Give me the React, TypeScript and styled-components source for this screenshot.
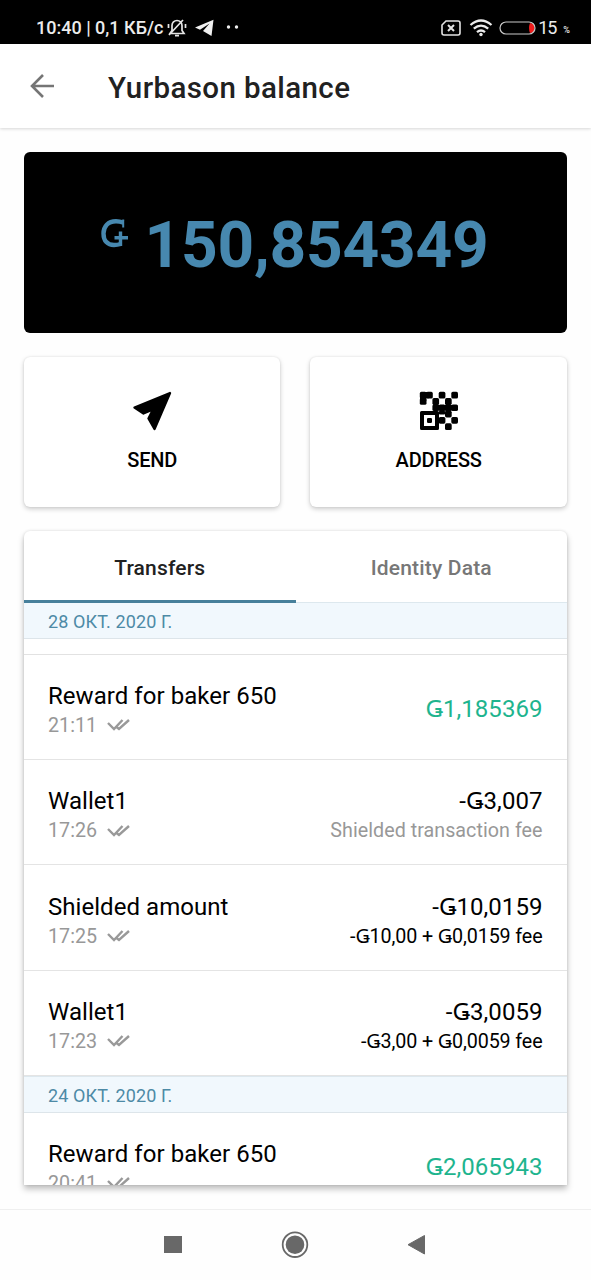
import React from "react";
import styled, { createGlobalStyle } from "styled-components";

const GlobalStyle = createGlobalStyle`
  * { box-sizing: border-box; }
  body { margin: 0; background: #fff; font-family: Roboto, "Noto Sans", sans-serif; }
`;

const Screen = styled.div`
  width: 591px;
  height: 1280px;
  display: flex;
  flex-direction: column;
  background: #fefefe;
  overflow: hidden;
`;

const StatusBar = styled.div`
  height: 44px;
  flex: none;
  display: flex;
  align-items: center;
  justify-content: space-between;
  padding: 11px 21px 0 36px;
  background: #000;
  color: #ececec;
  font-size: 18px;
  font-weight: 500;
  white-space: nowrap;
`;

const StatusGroup = styled.div`
  display: flex;
  align-items: center;
  height: 32px;
`;

const StatusText = styled.span<{ $level?: boolean }>`
  margin-left: ${(p) => (p.$level ? 2 : 0)}px;
  font-weight: ${(p) => (p.$level ? 400 : 500)};
  letter-spacing: ${(p) => (p.$level ? -1 : 0)}px;
`;

const Percent = styled.span`
  font-size: 9px;
  margin: 5px 0 0 7px;
`;

const StatusIcon = styled.svg<{ $left: number }>`
  display: block;
  margin-left: ${(p) => p.$left}px;
`;

const AppBar = styled.header`
  height: 84px;
  flex: none;
  display: flex;
  align-items: center;
  padding: 0 0 0 28px;
  background: #fff;
  box-shadow: 0 1px 3px rgba(0, 0, 0, 0.16);
`;

const Title = styled.h1`
  margin: 3px 0 0 52px;
  font-size: 29.5px;
  font-weight: 500;
  letter-spacing: 0.4px;
  line-height: 36px;
  color: #212121;
  white-space: nowrap;
`;

const Content = styled.main`
  flex: none;
  height: 1081px;
  padding: 24px 24px 0;
  display: flex;
  flex-direction: column;
  gap: 24px;
`;

const BalanceCard = styled.section`
  height: 180.5px;
  flex: none;
  display: flex;
  align-items: flex-start;
  padding: 56px 0 0 76px;
  border-radius: 6px;
  background: #000;
  color: #4788af;
`;

const CurrencyMark = styled.svg`
  display: block;
  flex: none;
  margin-top: 11px;
`;

const Amount = styled.span`
  margin-left: 16.5px;
  font-size: 64px;
  line-height: 76px;
  font-weight: 700;
  letter-spacing: -0.22px;
`;

const Actions = styled.div`
  display: grid;
  grid-template-columns: 256.4px 1fr;
  gap: 30px;
  height: 150px;
  flex: none;
`;

const Action = styled.button`
  display: flex;
  flex-direction: column;
  align-items: center;
  padding: 34px 0 0;
  border: 0;
  border-radius: 6px;
  background: #fff;
  color: #000;
  box-shadow: 0 2px 5px rgba(0, 0, 0, 0.2), 0 0 2px rgba(0, 0, 0, 0.1);
  font: 500 20px/24px Roboto, sans-serif;
  letter-spacing: -0.18px;
  svg { display: block; margin-bottom: 17px; }
`;

const Panel = styled.section`
  height: 654.5px;
  flex: none;
  border-radius: 6px 6px 0 0;
  background: #fff;
  box-shadow: 0 4px 6px rgba(0, 0, 0, 0.25), 0 0 3px rgba(0, 0, 0, 0.12);
  overflow: hidden;
`;

const Tabs = styled.div`
  display: grid;
  grid-template-columns: 1fr 1fr;
  height: 71.5px;
`;

const Tab = styled.div<{ $active?: boolean }>`
  position: relative;
  height: 72.5px;
  display: flex;
  align-items: center;
  justify-content: center;
  padding-top: ${(p) => (p.$active ? 6 : 3)}px;
  border-bottom: ${(p) => (p.$active ? "3px solid #47809b" : "0")};
  color: ${(p) => (p.$active ? "#212121" : "#777")};
  font-size: 21px;
  font-weight: 500;
  letter-spacing: 0.18px;
`;

const DateHeader = styled.div`
  height: 36.5px;
  padding-left: 24px;
  border-top: 1px solid #dde8ee;
  border-bottom: 1px solid #dde5ea;
  background: #f1f8fd;
  color: #4d8aa6;
  font-size: 18px;
  line-height: 37.6px;
  letter-spacing: 0.1px;
`;

const RowGap = styled.div`
  height: 16px;
  border-bottom: 1.5px solid #e2e2e2;
`;

const Row = styled.div<{ $last?: boolean }>`
  height: 105.4px;
  display: flex;
  justify-content: space-between;
  align-items: flex-start;
  padding: 26.3px 24.5px 0 24px;
  border-bottom: ${(p) => (p.$last ? 0 : 1.5)}px solid #e4e4e4;
`;

const Side = styled.div<{ $end?: boolean; $single?: boolean }>`
  display: flex;
  flex-direction: column;
  align-items: ${(p) => (p.$end ? "flex-end" : "flex-start")};
  padding-top: ${(p) => (p.$single ? 13 : 0)}px;
  white-space: nowrap;
`;

const Primary = styled.div<{ $tone?: string }>`
  font-size: 24px;
  line-height: 31px;
  letter-spacing: 0.05px;
  color: ${(p) => p.$tone ?? "#000"};
`;

const Secondary = styled.div<{ $dark?: boolean }>`
  display: flex;
  align-items: center;
  gap: 10px;
  font-size: 19.7px;
  line-height: 28px;
  letter-spacing: ${(p) => (p.$dark ? -0.11 : 0.04)}px;
  color: ${(p) => (p.$dark ? "#000" : "#989898")};
`;

const NavBar = styled.nav`
  height: 71px;
  flex: none;
  display: grid;
  grid-template-columns: 20px 28px 20px;
  justify-content: start;
  column-gap: 98px;
  align-items: center;
  padding-left: 163px;
  border-top: 1px solid #efefef;
  background: #fefefe;
`;

const DoubleCheck = () => (
  <svg width="23" height="13" viewBox="0 0 23 13" fill="none" stroke="#999" strokeWidth="2.4">
    <path d="M1 4l6 6L15.500 1M9.500 8l2.500 2L22 1" />
  </svg>
);

const BackArrow = () => (
  <svg width="28" height="28" viewBox="0 0 28 28" fill="none" stroke="#757575" strokeWidth="2.6">
    <path d="M15 3L4 14l11 11M3.500 14H26" />
  </svg>
);

const GtuMark = () => (
  <CurrencyMark width="28" height="30" viewBox="0 0 28 30" fill="none" stroke="currentColor" role="img" aria-label="GTU">
    <path d="M23.500 3.600Q19.500 2.200 16 2.200C8 2.200 3.500 7.500 3.500 14.500C3.500 22 7.500 26 14 26Q17.500 26 20.500 25" strokeWidth="4.400" />
    <path d="M23.200 .5V8.500" strokeWidth="2" />
    <path d="M20.500 12.500v14.500M14.500 18.700h13.500" strokeWidth="3.400" />
  </CurrencyMark>
);

const SendIcon = () => (
  <svg width="40" height="40" viewBox="0 0 40 40" stroke="#000" strokeWidth="2.4" strokeLinejoin="round">
    <path d="M38 2L2.500 16.500l9 6L21 18.500l-4.500 9 6 10.500z" />
  </svg>
);

const QR_CELL = 6.3;
const qrCells = ["##.#.#", "#.#.#.", "..####", "...##.", "...#.#", "....#."];
const qrBridges = [
  [13.2, 8, 5.2, 10],
  [25.7, 8, 5, 14],
  [14.5, 13, 21, 5.4],
];

const QrIcon = () => (
  <svg width="40" height="40" viewBox="-1 -1 40 40">
    {qrCells.flatMap((line, row) =>
      [...line].map((cell, col) =>
        cell === "#" ? (
          <rect
            key={`${row}-${col}`}
            x={col * QR_CELL - 0.2}
            y={row * QR_CELL - 0.2}
            width={QR_CELL + 0.4}
            height={QR_CELL + (row === 3 && col === 3 ? -2.5 : 0.4)}
            rx="1.6"
          />
        ) : null
      )
    )}
    {qrBridges.map(([x, y, w, h]) => (
      <rect key={`${x}-${y}`} x={x} y={y} width={w} height={h} />
    ))}
    <path d="M3 0h6v6.300H6.300V9H0V3z" />
    <path fillRule="evenodd" d="M1.500 18.900h16q1.500 0 1.500 1.500v16q0 1.500-1.500 1.500h-16Q0 37.900 0 36.400v-16q0-1.500 1.500-1.500zM4 22.900v11h11v-11z" />
    <rect x="7" y="25.900" width="5" height="5" rx="1.200" />
  </svg>
);

const BellOff = () => (
  <StatusIcon $left={4} width="20" height="20" viewBox="0 0 20 20" fill="none" stroke="#e4e4e4" strokeWidth="1.700">
    <path d="M3 15.500h14l-2-3V7.500a5 5 0 0 0-10 0v5zM8 17.700h4M2 17L16 2M1.500 6v4M18.500 6v4" />
  </StatusIcon>
);

const Plane = () => (
  <StatusIcon $left={8} width="19" height="18" viewBox="0 0 19 18" fill="#f0f0f0">
    <path d="M18.500 .8L0 8.500l5 2.200L14.500 4.500 8 12l8.500 5z" />
  </StatusIcon>
);

const Dots = () => (
  <StatusIcon $left={12} width="14" height="8" viewBox="0 0 14 8" fill="#eee">
    <circle cx="2.500" cy="3" r="1.700" />
    <circle cx="10.500" cy="3" r="1.700" />
  </StatusIcon>
);

const NoSim = () => (
  <StatusIcon $left={0} width="20" height="16" viewBox="0 0 20 16" fill="none" stroke="#e4e4e4" strokeWidth="1.600">
    <path d="M5 1h12q2 0 2 2v10q0 2-2 2H3q-2 0-2-2V5z" />
    <path d="M7 5l6 6M13 5l-6 6" strokeWidth="2" />
  </StatusIcon>
);

const Wifi = () => (
  <StatusIcon $left={8} width="24" height="18" viewBox="0 0 24 18" fill="none" stroke="#ececec" strokeWidth="2.300">
    <path d="M1.500 6Q12-3 22.500 6M4.800 9.700q7.200-6.200 14.400 0M8 13.200q4-3.400 8 0" />
    <circle cx="12" cy="15.500" r="1.700" fill="#ececec" stroke="none" />
  </StatusIcon>
);

const Battery = () => (
  <StatusIcon $left={6} width="37" height="14" viewBox="0 0 37 14">
    <path d="M31 2q3 0 4.500 2.500v5Q34 12 31 12q-2-5 0-10z" fill="#ef1c1c" />
    <rect x="1" y="1" width="35" height="12" rx="6" fill="none" stroke="#c9c9c9" strokeWidth="1.200" />
  </StatusIcon>
);

type Transfer = {
  name: string;
  time: string;
  amount: string;
  note?: string;
  muted?: boolean;
  income?: boolean;
};

const october28: Transfer[] = [
  { name: "Reward for baker 650", time: "21:11", amount: "Ǥ1,185369", income: true },
  { name: "Wallet1", time: "17:26", amount: "-Ǥ3,007", note: "Shielded transaction fee", muted: true },
  { name: "Shielded amount", time: "17:25", amount: "-Ǥ10,0159", note: "-Ǥ10,00 + Ǥ0,0159 fee" },
  { name: "Wallet1", time: "17:23", amount: "-Ǥ3,0059", note: "-Ǥ3,00 + Ǥ0,0059 fee" },
];

const october24: Transfer[] = [
  { name: "Reward for baker 650", time: "20:41", amount: "Ǥ2,065943", income: true },
];

const TransferRow = ({ item, last }: { item: Transfer; last?: boolean }) => (
  <Row $last={last}>
    <Side>
      <Primary>{item.name}</Primary>
      <Secondary>
        {item.time}
        <DoubleCheck />
      </Secondary>
    </Side>
    <Side $end $single={!item.note}>
      <Primary $tone={item.income ? "#1eb48e" : undefined}>{item.amount}</Primary>
      {item.note && <Secondary $dark={!item.muted}>{item.note}</Secondary>}
    </Side>
  </Row>
);

export default function App() {
  return (
    <>
      <GlobalStyle />
      <Screen>
        <StatusBar>
          <StatusGroup>
            <StatusText>10:40 | 0,1 КБ/с</StatusText>
            <BellOff />
            <Plane />
            <Dots />
          </StatusGroup>
          <StatusGroup>
            <NoSim />
            <Wifi />
            <Battery />
            <StatusText $level>15</StatusText>
            <Percent>%</Percent>
          </StatusGroup>
        </StatusBar>
        <AppBar>
          <BackArrow />
          <Title>Yurbason balance</Title>
        </AppBar>
        <Content>
          <BalanceCard>
            <GtuMark />
            <Amount>150,854349</Amount>
          </BalanceCard>
          <Actions>
            <Action>
              <SendIcon />
              SEND
            </Action>
            <Action>
              <QrIcon />
              ADDRESS
            </Action>
          </Actions>
          <Panel>
            <Tabs>
              <Tab $active>Transfers</Tab>
              <Tab>Identity Data</Tab>
            </Tabs>
            <DateHeader>28 ОКТ. 2020 Г.</DateHeader>
            <RowGap />
            {october28.map((t) => (
              <TransferRow key={t.time} item={t} />
            ))}
            <DateHeader>24 ОКТ. 2020 Г.</DateHeader>
            {october24.map((t) => (
              <TransferRow key={t.time} item={t} last />
            ))}
          </Panel>
        </Content>
        <NavBar>
          <svg width="20" height="20" viewBox="0 0 20 20">
            <rect x="1" y="1" width="18" height="17" fill="#686868" />
          </svg>
          <svg width="28" height="28" viewBox="0 0 28 28">
            <circle cx="14" cy="13.700" r="12.300" fill="none" stroke="#686868" strokeWidth="1.800" />
            <circle cx="14" cy="13.700" r="9.300" fill="#686868" />
          </svg>
          <svg width="20" height="22" viewBox="0 0 20 22">
            <path d="M17.500 1.500v18.500L1 10.700z" fill="#686868" stroke="#686868" strokeLinejoin="round" />
          </svg>
        </NavBar>
      </Screen>
    </>
  );
}
